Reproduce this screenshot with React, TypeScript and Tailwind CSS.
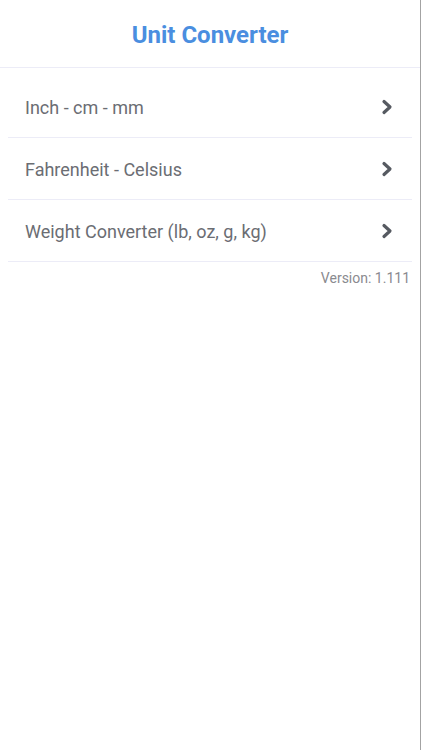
type Converter = { id: string; label: string };

const converters: Converter[] = [
  { id: 'length', label: 'Inch - cm - mm' },
  { id: 'temperature', label: 'Fahrenheit - Celsius' },
  { id: 'weight', label: 'Weight Converter (lb, oz, g, kg)' },
];

function Chevron() {
  return (
    <svg width="12" height="16" viewBox="0 0 12 16" fill="none">
      <polyline points="3,2.5 9,8 3,13.5" stroke="#565a61" strokeWidth="3.2" strokeLinecap="round" strokeLinejoin="round" />
    </svg>
  );
}

export default function App() {
  return (
    <div className="h-[750px] w-[422px] bg-white font-['Roboto',sans-serif]">
      <div className="h-full w-[421px] border-r border-[#a3a3a3]">
        {/* Title bar */}
        <header className="flex h-[68px] items-center justify-center border-b border-[#ececf7] pt-[2px]">
          <h1 className="text-[24px] font-bold text-[#4a8ee0]">Unit Converter</h1>
        </header>

        {/* Converter list */}
        <ul className="px-2 pt-2">
          {converters.map((c) => (
            <li
              key={c.id}
              className="flex h-[62px] items-center justify-between border-b border-[#ececf7] pl-[17px] pr-[19px] pt-[1px]"
            >
              <span className="text-[18px] text-[#6b6d73]">{c.label}</span>
              <Chevron />
            </li>
          ))}
        </ul>
        <p className="mt-[6px] pr-[10px] text-right text-[14px] text-[#8a8a8f]">Version: 1.111</p>
      </div>
    </div>
  );
}
